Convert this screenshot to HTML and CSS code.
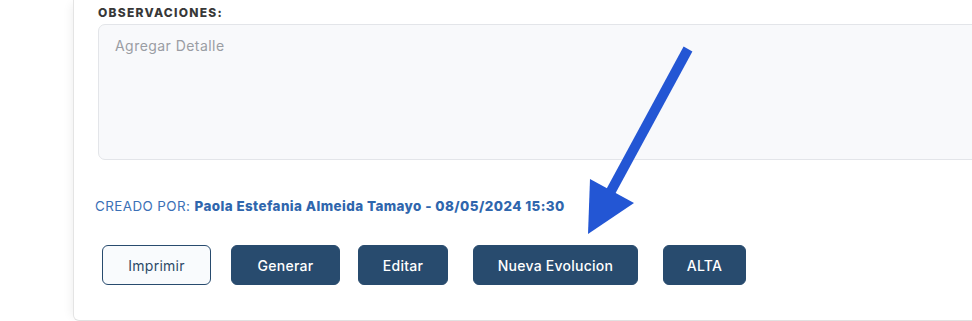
FILE: index.html
```html
<!DOCTYPE html>
<html lang="es">
<head>
<meta charset="utf-8">
<title>Observaciones</title>
<link rel="stylesheet" href="styles.css">
</head>
<body>
<div class="page">
  <section class="card">
    <label class="field-label" for="obs">OBSERVACIONES:</label>
    <textarea id="obs" class="field-area" placeholder="Agregar Detalle"></textarea>
    <p class="created">CREADO POR: <strong>Paola Estefania Almeida Tamayo - 08/05/2024 15:30</strong></p>
    <div class="actions">
      <button class="btn btn-outline w-imprimir">Imprimir</button>
      <button class="btn w-generar">Generar</button>
      <button class="btn w-editar">Editar</button>
      <button class="btn w-nueva">Nueva Evolucion</button>
      <button class="btn w-alta">ALTA</button>
    </div>
  </section>
  <svg class="annot-arrow" width="972" height="321" viewBox="0 0 972 321" aria-hidden="true">
    <polygon points="683.6,46.6 692.4,51.4 614,196 605.2,191.2" fill="#2356d4"/>
    <polygon points="590,179 634,203 588,234" fill="#2356d4"/>
  </svg>
</div>
</body>
</html>
```

FILE: styles.css
```css
html, body {
  margin: 0;
  padding: 0;
  background: #ffffff;
  overflow: hidden;
}
body {
  width: 972px;
  height: 321px;
  font-family: Inter, "Noto Sans", Roboto, sans-serif;
}
.page {
  position: relative;
  width: 972px;
  height: 321px;
  overflow: hidden;
}
.card {
  box-sizing: border-box;
  margin-left: 73px;
  width: 960px;
  height: 321px;
  background: #ffffff;
  border-left: 1px solid #e4e4e4;
  border-bottom: 1px solid #e1e1e1;
  border-bottom-left-radius: 6px;
  box-shadow: -6px 0 10px -4px rgba(0,0,0,0.06);
  padding: 5px 0 0 24px;
  display: flex;
  flex-direction: column;
}
.field-label {
  display: block;
  font-size: 12px;
  line-height: 16px;
  font-weight: 800;
  color: #383838;
  letter-spacing: 1.25px;
  height: 19px;
}
.field-area {
  box-sizing: border-box;
  display: block;
  width: 920px;
  height: 136px;
  margin: 0;
  padding: 11px 16px;
  border: 1px solid #e3e5e9;
  border-radius: 7px;
  background: #f8f9fb;
  font-family: inherit;
  font-size: 14px;
  line-height: 20px;
  letter-spacing: 0.45px;
  color: #333;
  resize: none;
  outline: none;
}
.field-area::placeholder {
  color: #9a9da3;
}
.created {
  margin: 37px 0 0 -3px;
  font-size: 13.4px;
  line-height: 18px;
  color: #3b70b6;
  letter-spacing: 0.43px;
}
.created strong {
  font-weight: 800;
  color: #2f66ad;
}
.actions {
  display: flex;
  margin: 30px 0 0 4px;
}
.btn {
  box-sizing: border-box;
  height: 40px;
  padding: 0;
  border: 1px solid #284b6e;
  border-radius: 6px;
  background: #284b6e;
  color: #ffffff;
  font-family: inherit;
  font-size: 14px;
  font-weight: 500;
  letter-spacing: 0.25px;
  cursor: pointer;
}
.btn-outline {
  background: #f9fbfd;
  color: #2d4a68;
  font-weight: 400;
}
.w-imprimir { width: 109px; }
.w-generar { width: 109px; margin-left: 20px; }
.w-editar { width: 90px; margin-left: 18px; }
.w-nueva { width: 165px; margin-left: 25px; }
.w-alta { width: 83px; margin-left: 25px; }
.annot-arrow {
  position: absolute;
  left: 0;
  top: 0;
  pointer-events: none;
}
```
